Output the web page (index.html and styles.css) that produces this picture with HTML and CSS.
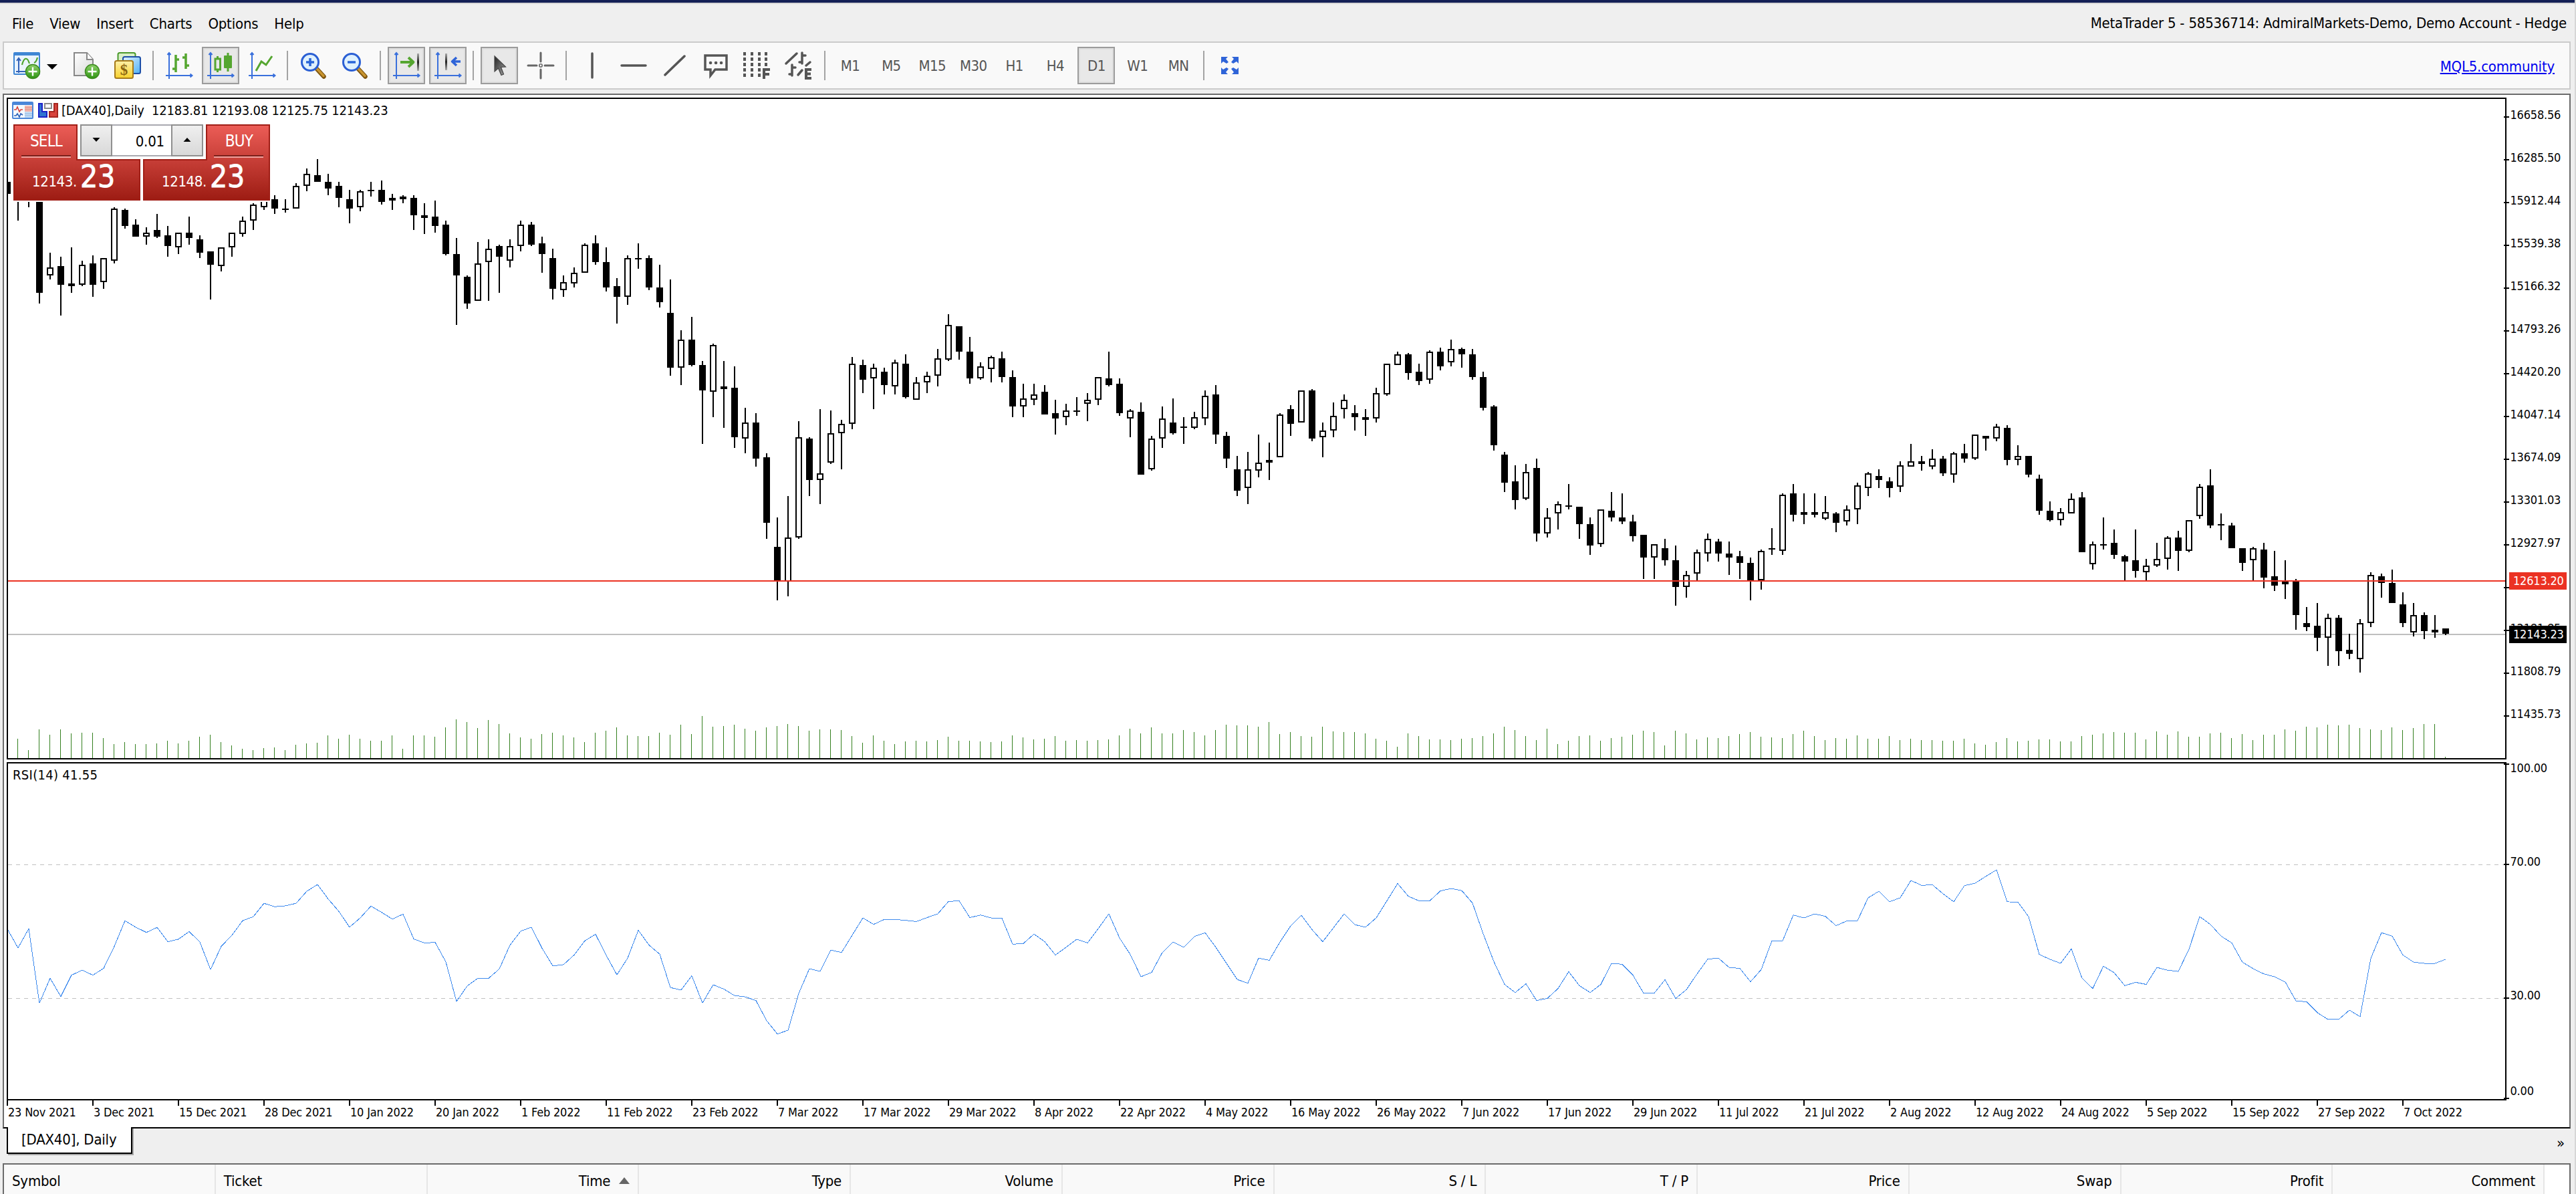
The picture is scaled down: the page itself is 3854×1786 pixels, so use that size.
FILE: index.html
```html
<!DOCTYPE html>
<html lang="en">
<head>
    <meta charset="UTF-8">
    <title>MetaTrader 5</title>
    <link rel="stylesheet" href="styles.css">
</head>
<body>
    <div class="titlebar-edge"></div>

    <header class="menubar">
        <nav class="menu">
            <span>File</span>
            <span>View</span>
            <span>Insert</span>
            <span>Charts</span>
            <span>Options</span>
            <span>Help</span>
        </nav>
        <div class="account">MetaTrader 5 - 58536714: AdmiralMarkets-Demo, Demo Account - Hedge</div>
    </header>

    <svg class="defs" width="0" height="0">
        <defs>
            <linearGradient id="greenBall" x1="0" y1="0" x2="0" y2="1">
                <stop offset="0" stop-color="#8ed16a"/><stop offset="1" stop-color="#2f9413"/>
            </linearGradient>
            <linearGradient id="page" x1="0" y1="0" x2="1" y2="1">
                <stop offset="0" stop-color="#fff"/><stop offset="1" stop-color="#d8d8d8"/>
            </linearGradient>
            <linearGradient id="gold" x1="0" y1="0" x2="0" y2="1">
                <stop offset="0" stop-color="#fff0a8"/><stop offset="1" stop-color="#f7d12c"/>
            </linearGradient>
            <linearGradient id="sky" x1="0" y1="0" x2="1" y2="1">
                <stop offset="0" stop-color="#e4f4ff"/><stop offset="1" stop-color="#4fb0f5"/>
            </linearGradient>
            <linearGradient id="steel" x1="0" y1="0" x2="0" y2="1">
                <stop offset="0" stop-color="#aaa"/><stop offset=".5" stop-color="#222"/><stop offset="1" stop-color="#aaa"/>
            </linearGradient>
            <linearGradient id="pointer" x1="0" y1="0" x2="1" y2="1">
                <stop offset="0" stop-color="#222"/><stop offset="1" stop-color="#a5a5a5"/>
            </linearGradient>
            <linearGradient id="red" x1="0" y1="0" x2="0" y2="1">
                <stop offset="0" stop-color="#ec5d57"/><stop offset="1" stop-color="#9d1c13"/>
            </linearGradient>
            <linearGradient id="button" x1="0" y1="0" x2="0" y2="1">
                <stop offset="0" stop-color="#f0f0f0"/><stop offset="1" stop-color="#d8d8d8"/>
            </linearGradient>
            <g id="plus">
                <circle cx="29" cy="29" r="10.5" fill="url(#greenBall)" stroke="#3c8a1e" stroke-width="1.5"/>
                <path d="M29 22.5v13M22.5 29h13" stroke="#fff" stroke-width="2.4" fill="none"/>
            </g>
            <g id="axes" stroke="#3a70dc" stroke-width="2" fill="none">
                <path d="M5 1v39M0 35h39"/>
                <path d="M2.5 4L5 1l2.5 3M36.5 32.5L39.5 35l-3 2.5"/>
            </g>
            <g id="lens">
                <path d="M24 24l11.5 12.5" stroke="#7d5510" stroke-width="6.5" stroke-linecap="round"/>
                <path d="M24.5 24l10.5 11.5" stroke="#c9952f" stroke-width="3.5" stroke-linecap="round"/>
                <circle cx="15" cy="15" r="12.5" fill="#dff1fd" stroke="#2a5fd4" stroke-width="3"/>
            </g>
        </defs>
    </svg>

    <div class="toolbar">
        <div class="tool">
            <svg class="icon" viewBox="0 0 40 40">
                <rect x="1" y="1" width="38" height="32" rx="1" fill="#eaf4fd" stroke="#3f86d4" stroke-width="2"/>
                <path d="M1 3h38" stroke="#3f86d4" stroke-width="4"/>
                <path d="M8 31V10M5 13l3-4 3 4M4 29h20" stroke="#3463b8" stroke-width="2" fill="none"/>
                <path d="M13 19c3-12 8-12 11-2M31 16c3-1 4-4 5-8" stroke="#4fa52e" stroke-width="2.2" fill="none"/>
                <use href="#plus"/>
            </svg>
        </div>
        <div class="caret"></div>
        <div class="tool">
            <svg class="icon" viewBox="0 0 40 40">
                <path d="M2 1h19l9 10v24H2z" fill="url(#page)" stroke="#888" stroke-width="2"/>
                <path d="M21 1v10h9" fill="#fff" stroke="#888" stroke-width="2"/>
                <use href="#plus"/>
            </svg>
        </div>
        <div class="tool">
            <svg class="icon" viewBox="0 0 40 40">
                <rect x="5.5" y="1" width="26" height="25" rx="2.5" fill="#d9f0c8" stroke="#4b9a2c" stroke-width="2"/>
                <rect x="13" y="7" width="26" height="25" rx="2.5" fill="url(#sky)" stroke="#1d4fa8" stroke-width="2"/>
                <rect x="1" y="13" width="27" height="26" rx="2.5" fill="url(#gold)" stroke="#a67a1a" stroke-width="2"/>
                <text x="14.5" y="34" class="dollar">$</text>
            </svg>
        </div>
        <i class="sep"></i>
        <div class="tool">
            <svg class="icon" viewBox="0 0 40 40">
                <use href="#axes"/>
                <path d="M15 4v26M10 25h5M15 11h5M30 2v23M25 8h5M30 20h5" stroke="#55a630" stroke-width="3.5" fill="none"/>
            </svg>
        </div>
        <div class="tool active">
            <svg class="icon" viewBox="0 0 40 40">
                <use href="#axes"/>
                <path d="M15.5 6v3M15.5 26v4M31 1v28" stroke="#55a630" stroke-width="3"/>
                <rect x="12" y="10" width="7.5" height="16" fill="none" stroke="#55a630" stroke-width="3"/>
                <rect x="25" y="5" width="12" height="19" rx="1" fill="#55a630"/>
            </svg>
        </div>
        <div class="tool">
            <svg class="icon" viewBox="0 0 40 40">
                <use href="#axes"/>
                <path d="M11 28l8-14 7 5 9-13" stroke="#55a630" stroke-width="3" fill="none"/>
            </svg>
        </div>
        <i class="sep"></i>
        <div class="tool">
            <svg class="icon" viewBox="0 0 40 40">
                <use href="#lens"/>
                <path d="M9 15h12M15 9v12" stroke="#2a66d8" stroke-width="3.5"/>
            </svg>
        </div>
        <div class="tool">
            <svg class="icon" viewBox="0 0 40 40">
                <use href="#lens"/>
                <path d="M9 15h12" stroke="#2a66d8" stroke-width="3.5"/>
            </svg>
        </div>
        <i class="sep"></i>
        <div class="tool active">
            <svg class="icon" viewBox="0 0 40 40">
                <use href="#axes"/>
                <path d="M11 15h19M23 8l7.5 7-7.5 7" stroke="#55a630" stroke-width="3.8" fill="none" stroke-linejoin="round"/>
                <rect x="36" y="2" width="3" height="26" fill="url(#steel)"/>
            </svg>
        </div>
        <div class="tool active">
            <svg class="icon" viewBox="0 0 40 40">
                <use href="#axes"/>
                <rect x="16" y="2" width="3" height="25" fill="url(#steel)"/>
                <path d="M39 14H27M33 8l-6.5 6 6.5 6" stroke="#2f64d8" stroke-width="3.6" fill="none" stroke-linejoin="round"/>
            </svg>
        </div>
        <i class="sep"></i>
        <div class="tool active">
            <svg class="icon" viewBox="0 0 40 40">
                <path d="M13 6v23l5.5-5 4.5 10.500 3.500-1.500-4-10.500 7-.5z" fill="url(#pointer)" stroke="#444" stroke-width="1.2"/>
            </svg>
        </div>
        <div class="tool">
            <svg class="icon" viewBox="0 0 40 40">
                <path d="M20 1v13M20 26v13M1 20h13M26 20h13" stroke="#666" stroke-width="3" stroke-linecap="round"/>
                <circle cx="20" cy="20" r="2.2" fill="none" stroke="#666" stroke-width="1.6"/>
            </svg>
        </div>
        <i class="sep"></i>
        <div class="tool">
            <svg class="icon dark" viewBox="0 0 40 40"><path d="M20 2v36" stroke-width="3.5"/></svg>
        </div>
        <div class="tool">
            <svg class="icon dark" viewBox="0 0 40 40"><path d="M2 20h36" stroke-width="3.5"/></svg>
        </div>
        <div class="tool">
            <svg class="icon dark" viewBox="0 0 40 40"><path d="M5 34L34 6" stroke-width="3.5"/></svg>
        </div>
        <div class="tool">
            <svg class="icon dark" viewBox="0 0 40 40">
                <path d="M3 5h32v21H18l-7 9v-9H3z" stroke-width="3.5" stroke-linecap="butt"/>
                <path d="M11 16h.1M19 16h.1M27 16h.1" stroke-width="4.5"/>
            </svg>
        </div>
        <div class="tool">
            <svg class="icon dark" viewBox="0 0 40 40">
                <path d="M0 0v38M11 0v38M22 0v38M32 0v22" stroke-width="4" stroke-dasharray="5 3" stroke-linecap="butt"/>
                <path d="M29 40V26h9M29 33h8" stroke-width="4" stroke-linecap="butt"/>
            </svg>
        </div>
        <div class="tool">
            <svg class="icon dark" viewBox="0 0 40 40">
                <path d="M0 17L16 2M24 1v16M20 15h4M24 5h5M9 19v16M5 33h4M9 23h5M18 34l6-7M30 20l6-5" stroke-width="3.5"/>
                <path d="M38 26h-8v13h8M30 32.5h7" stroke-width="4" stroke-linecap="butt"/>
            </svg>
        </div>
        <i class="sep"></i>
        <div class="periods">
            <div class="tool">M1</div>
            <div class="tool">M5</div>
            <div class="tool">M15</div>
            <div class="tool">M30</div>
            <div class="tool">H1</div>
            <div class="tool">H4</div>
            <div class="tool active">D1</div>
            <div class="tool">W1</div>
            <div class="tool">MN</div>
        </div>
        <i class="sep"></i>
        <div class="tool">
            <svg class="icon" viewBox="0 0 40 40">
                <g fill="#2f64d8">
                    <path d="M7 7h10l-3 3 4 5-3 2-5-3-3 3z"/>
                    <path d="M33 7H23l3 3-4 5 3 2 5-3 3 3z"/>
                    <path d="M7 33h10l-3-3 4-5-3-2-5 3-3-3z"/>
                    <path d="M33 33H23l3-3-4-5 3-2 5 3 3-3z"/>
                </g>
            </svg>
        </div>
        <a class="community" href="#">MQL5.community</a>
    </div>

    <main class="chart-window">
        <svg id="chart" viewBox="6 142 3838 1544" width="3838" height="1544">
            <g id="volumes" class="volume"></g>
            <path id="bidLine" class="bid-line" d="M12 949H3748"/>
            <path id="wicks" class="candle"/>
            <path id="hollow" class="candle-hollow"/>
            <path class="alert-line" d="M12 869H3748"/>
            <path class="level" d="M12 1293.5H3748M12 1493.5H3748"/>
            <polyline id="rsi" class="rsi"/>
            <path class="frame" d="M3749 147H11V1135H3749zM3749 1141H11V1645H3749z"/>
            <g id="priceAxis"></g>
            <g id="dateAxis"></g>

            <!-- chart caption -->
            <g transform="translate(18 152)">
                <rect x="1" y="1" width="30" height="24" rx="1" fill="#f4f9fe" stroke="#4a86d8" stroke-width="2"/>
                <path d="M1 3h30" stroke="#4a86d8" stroke-width="4"/>
                <path d="M19 6h11v9H19z" fill="#f3b8ae"/>
                <path d="M19 15h11v9H19z" fill="#c5ddf4"/>
                <path d="M19 9h11M19 12h11" stroke="#e08a80"/>
                <path d="M19 18h11M19 21h11" stroke="#8fb6e2"/>
                <path d="M3 12h3l2-4 3 7 2-3h3" stroke="#d8423a" stroke-width="1.6" fill="none"/>
                <path d="M3 21h3l2-3 3 5 2-5 3 2" stroke="#2b62b8" stroke-width="1.6" fill="none"/>
            </g>
            <g transform="translate(57 154)">
                <path d="M1 1h5v12h7v8H1z" fill="#2f74d0" stroke="#1d22c8" stroke-width="2"/>
                <path d="M29 1h-5v12h-7v8h12z" fill="#d8433c" stroke="#a52720" stroke-width="2"/>
                <rect x="10" y="1" width="10" height="7" fill="#fff" stroke="#8a8a8a" stroke-width="2"/>
            </g>
            <text class="caption" x="92" y="172">[DAX40],Daily</text>
            <text class="caption" x="227" y="172">12183.81 12193.08 12125.75 12143.23</text>
            <text class="caption indicator" x="19" y="1166">RSI(14) 41.55</text>

            <!-- one click trading panel -->
            <g class="trade">
                <rect x="18" y="184" width="388" height="118" fill="#fff"/>
                <path class="deal" d="M21 187H115V239H209V299H21z"/>
                <path class="deal" d="M403 187H309V239H215V299H403z"/>
                <path d="M32 233h74M320 233h74" stroke="#7b1f1a" stroke-width="2"/>
                <path d="M32 235h74M320 235h74" stroke="#f0a19d" stroke-width="2"/>
                <rect x="121" y="187" width="182" height="46" class="spin-field"/>
                <rect x="121" y="187" width="46" height="46" class="spin"/>
                <rect x="257" y="187" width="46" height="46" class="spin"/>
                <path d="M138.5 206h11l-5.5 6zM274.5 212h11l-5.5-6z"/>
                <text class="deal-label" x="69" y="219">SELL</text>
                <text class="deal-label" x="357.5" y="219">BUY</text>
                <text class="lots" x="246" y="219">0.01</text>
                <text class="pips" x="48" y="279">12143.</text>
                <text class="big" x="120" y="280">23</text>
                <text class="pips" x="242" y="279">12148.</text>
                <text class="big" x="314" y="280">23</text>
            </g>
        </svg>
    </main>

    <div class="tabs">
        <div class="tab">[DAX40], Daily</div>
        <div class="more">»</div>
    </div>

    <section class="orders">
        <div class="col left">Symbol</div>
        <div class="col left">Ticket</div>
        <div class="col">Time <i class="sorted"></i></div>
        <div class="col">Type</div>
        <div class="col">Volume</div>
        <div class="col">Price</div>
        <div class="col">S / L</div>
        <div class="col">T / P</div>
        <div class="col">Price</div>
        <div class="col">Swap</div>
        <div class="col">Profit</div>
        <div class="col">Comment</div>
    </section>

    <script src="chart.js"></script>
</body>
</html>
```

FILE: styles.css
```css
* {
    box-sizing: border-box;
}
body {
    margin: 0;
    width: 3854px;
    height: 1786px;
    overflow: hidden;
    display: flex;
    flex-direction: column;
    background: #efefef;
    border-right: 2px solid #d6d6d6;
    color: #000;
    font-family: "DejaVu Sans Condensed", "DejaVu Sans", Tahoma, sans-serif;
    font-stretch: condensed;
    font-size: 22px;
    letter-spacing: -0.2px;
}
.defs {
    position: absolute;
}
.titlebar-edge {
    width: 3854px;
    height: 6px;
    flex: none;
    background: #142056;
    border-bottom: 2px solid #d6d6d6;
}

/* menu */
.menubar {
    height: 56px;
    flex: none;
    display: flex;
    justify-content: space-between;
    align-items: center;
    padding: 0 12px 0 18px;
}
.menu {
    display: flex;
    gap: 24px;
    padding-top: 3px;
}
.account {
    padding-top: 1px;
}

/* toolbar */
.toolbar {
    height: 72px;
    flex: none;
    margin: 0 6px 6px 4px;
    padding-left: 6px;
    display: flex;
    align-items: center;
    gap: 6px;
    background: #f9f9f9;
    border: 2px solid #cbcbcb;
}
.tool {
    width: 56px;
    height: 56px;
    flex: none;
    display: flex;
    align-items: center;
    justify-content: center;
    color: #555;
    letter-spacing: -0.6px;
}
.active {
    background: #e8e8e8;
    border: 2px solid #9c9c9c;
    box-shadow: inset 0 0 0 2px #dedede;
}
.icon {
    width: 40px;
    height: 40px;
    flex: none;
    overflow: visible;
}
.dark {
    fill: none;
    stroke: #555;
    stroke-linecap: round;
}
.dollar {
    font: bold 23px "Liberation Serif", serif;
    text-anchor: middle;
    letter-spacing: 0;
    fill: #8a6410;
}
.caret {
    width: 27px;
    height: 8px;
    flex: none;
    margin-left: -6px;
    background: #000;
    clip-path: polygon(2px 0, 18px 0, 10px 8px);
    margin-top: 4px;
}
.sep {
    width: 2px;
    height: 44px;
    flex: none;
    margin: 0 4px 0 3px;
    background: #a3a3a3;
}
.periods {
    display: flex;
    gap: 5.4px;
    margin-left: -1px;
}
.community {
    margin-left: auto;
    margin-right: 22px;
    padding-top: 2px;
    color: #00e;
    text-underline-offset: 2px;
    text-decoration-thickness: 2px;
}

/* chart */
.chart-window {
    height: 1548px;
    flex: none;
    margin: 0 6px 0 4px;
    background: #fff;
    border: 2px solid #6b6b6b;
    border-bottom-color: #000;
}
#chart {
    display: block;
    overflow: hidden;
}
.frame,
.tick {
    fill: none;
    stroke: #000;
    stroke-width: 2;
    shape-rendering: crispEdges;
}
.candle {
    fill: #000;
    shape-rendering: crispEdges;
}
.candle-hollow {
    fill: #fff;
    shape-rendering: crispEdges;
}
.volume {
    fill: #34801f;
    shape-rendering: crispEdges;
}
.bid-line {
    stroke: #bfbfbf;
    stroke-width: 2;
}
.alert-line {
    stroke: #eb3223;
    stroke-width: 2;
}
.level {
    stroke: #c0c0c0;
    stroke-width: 1;
    stroke-dasharray: 6 6;
}
.rsi {
    fill: none;
    stroke: #3f8bee;
    stroke-width: 1;
    shape-rendering: crispEdges;
}
.axis-text {
    font-size: 18px;
}
.tag-text {
    font-size: 18px;
    fill: #fff;
}
.caption {
    font-size: 20px;
}
.indicator {
    letter-spacing: 0.3px;
}
.deal {
    fill: url(#red);
    stroke: #a01f17;
    stroke-width: 2;
}
.spin-field {
    fill: #fff;
    stroke: #a9a9b0;
    stroke-width: 2;
}
.spin {
    fill: url(#button);
    stroke: #8f8f8f;
    stroke-width: 2;
}
.deal-label {
    font-size: 24px;
    letter-spacing: -0.8px;
    text-anchor: middle;
    fill: #fff;
}
.lots {
    text-anchor: end;
}
.pips {
    fill: #fff;
    letter-spacing: -0.4px;
}
.big {
    font-size: 46px;
    fill: #fff;
    stroke: #fff;
    stroke-width: 0.8;
}

/* chart tabs */
.tabs {
    height: 52px;
    flex: none;
    display: flex;
    justify-content: space-between;
    align-items: flex-start;
    padding: 0 15px 0 10px;
}
.tab {
    width: 188px;
    height: 40px;
    margin-top: -2px;
    padding: 6px 0 0 20px;
    background: #fff;
    border: 2px solid #000;
    border-top: none;
    box-shadow: 2px 2px 0 #a8a8a8;
    white-space: nowrap;
}
.more {
    padding-top: 9px;
}

/* orders table */
.orders {
    flex: 1;
    display: flex;
    margin: 0 6px 0 4px;
    background: #fff;
    border: 2px solid #6b6b6b;
    border-bottom: none;
}
.col {
    width: 316.75px;
    flex: none;
    display: flex;
    justify-content: flex-end;
    align-items: center;
    padding: 4px 12px 0 12px;
    background: #f9f9f9;
    border-right: 2px solid #e6e6e6;
}
.left {
    justify-content: flex-start;
}
.sorted {
    margin-left: 13px;
    border: 8px solid transparent;
    border-top: none;
    border-bottom: 10px solid #666;
}
```

FILE: chart.js
```js
const NS = 'http://www.w3.org/2000/svg';
const barX = i => 11 + 16 * i;

// high, body top, body bottom, low (one unit = 2px); trailing 1 = rising bar
const candles = [
    [136,136,145,145],[140,145,151,165],[140,145,151,155],[140,142,219,227],[189,200,206,209,1],
    [192,199,213,236],[185,212,214,219],[195,198,213,214,1],[191,197,213,222],[193,193,211,216,1],
    [155,156,195,197,1],[156,157,169,171],[164,168,177,177],[170,174,177,183,1],[160,172,177,178],
    [169,176,184,192],[174,174,185,190,1],[162,174,178,183],[176,179,189,193],[188,188,198,224],
    [185,185,199,203,1],[174,174,185,192,1],[162,165,175,177,1],[152,153,165,172,1],[140,142,155,157,1],
    [146,149,156,160],[149,156,157,159],[137,139,156,156,1],[126,130,139,143,1],[119,131,136,136],
    [130,136,141,146],[136,139,148,155],[142,149,156,167],[142,143,155,158,1],[136,142,143,147],
    [135,142,151,153],[145,148,150,157],[146,147,149,152],[146,148,161,172],[152,161,163,175],
    [150,162,169,174],[165,168,190,191],[178,190,206,243],[206,207,227,231],[181,197,225,225,1],
    [179,186,196,225,1],[183,184,192,219],[179,184,195,200,1],[165,168,184,188,1],[166,168,183,184],
    [177,182,190,204],[186,193,216,224],[206,211,217,222,1],[200,204,212,215,1],[182,183,204,204,1],
    [176,182,196,198],[185,196,215,218],[208,214,222,242],[191,193,222,228,1],[182,193,194,201],
    [191,193,215,217],[198,215,226,230],[209,234,275,281],[247,254,275,288,1],[237,254,273,274],
    [270,273,292,332],[257,258,293,312,1],[270,289,291,320],[274,290,327,335],[305,316,328,339,1],
    [309,316,343,349],[339,342,391,403],[387,409,434,449],[371,402,435,446,1],[315,327,402,403,1],
    [327,328,359,371],[306,354,359,377,1],[307,324,346,347,1],[314,317,324,351,1],[267,272,317,321,1],
    [269,273,284,294],[272,275,283,306,1],[275,278,288,295],[269,271,289,295,1],[265,272,297,298],
    [282,286,299,299,1],[278,281,286,294,1],[261,268,281,289,1],[235,243,269,270,1],[244,244,263,269],
    [252,263,283,287],[271,274,283,284,1],[266,267,276,286,1],[263,268,282,286],[277,282,304,312],
    [287,298,304,312,1],[287,295,299,303,1],[288,293,310,310],[299,309,313,325],[302,307,312,318,1],
    [297,307,308,311],[294,299,302,315,1],[282,282,299,303,1],[263,283,288,289],[283,287,309,311],
    [306,307,313,327,1],[301,308,355,355],[326,328,351,352,1],[304,313,328,335,1],[298,316,324,325],
    [312,319,320,332],[308,312,320,321,1],[292,296,313,318,1],[288,295,325,332],[323,326,343,350],
    [341,351,367,371],[338,351,365,377,1],[325,346,352,357,1],[331,344,346,359],[309,310,342,342,1],
    [303,306,317,326],[292,292,316,316,1],[291,292,328,330],[316,322,327,342,1],[301,311,322,327,1],
    [295,299,306,313,1],[303,309,312,322],[306,312,314,326],[290,294,313,316,1],[272,272,295,296,1],
    [263,265,273,273,1],[264,265,279,284],[272,278,285,288],[262,263,284,287,1],[260,263,274,277],
    [254,261,271,274,1],[260,261,265,275],[261,265,282,284],[278,282,305,307],[303,304,333,337],
    [338,340,361,368],[348,360,374,381],[347,353,373,374,1],[343,350,399,405],[380,387,399,402,1],
    [375,377,384,396,1],[362,378,379,381],[379,379,392,403],[387,392,408,415],[381,381,407,409,1],
    [368,382,387,390],[369,387,390,392],[385,390,401,405],[400,400,417,433],[407,407,417,433,1],
    [403,410,419,423],[408,419,439,453],[427,430,439,447,1],[411,413,429,434,1],[399,403,414,420,1],
    [403,405,414,420],[405,414,417,430],[412,416,421,433],[417,421,434,449],[411,412,434,441,1],
    [395,410,411,415],[369,370,412,415,1],[362,369,385,390],[369,383,385,392],[369,383,385,387],
    [371,383,388,389,1],[383,384,391,398],[378,381,390,393,1],[361,363,381,392,1],[353,354,365,371,1],
    [351,356,359,365],[357,360,365,372],[345,348,364,368,1],[332,345,349,349,1],[341,345,347,352],
    [336,343,349,351,1],[341,343,354,356],[338,339,355,361,1],[332,339,343,346],[325,325,343,344,1],
    [326,326,328,337],[317,319,328,330,1],[318,320,344,348],[333,341,344,348,1],[341,341,355,357],
    [355,358,382,385],[375,382,389,390],[380,383,389,393,1],[369,373,384,384,1],[368,372,413,413],
    [405,407,422,426,1],[387,407,408,411],[396,406,415,418],[415,416,420,434],[396,419,427,432],
    [418,423,428,434,1],[406,418,423,424,1],[401,402,418,426,1],[397,402,412,427],[389,389,412,413,1],
    [362,364,386,388,1],[351,363,393,395],[384,392,393,404],[391,393,410,410],[410,410,421,427],
    [409,410,419,434,1],[406,411,432,440],[412,431,438,442],[419,435,437,448],[433,435,460,471],
    [454,466,469,472],[451,468,477,487],[459,462,477,498,1],[460,462,487,498],[474,486,489,493],
    [463,466,493,503,1],[428,430,466,469,1],[429,431,436,447],[426,436,451,451],[443,452,466,469],
    [451,460,473,476,1],[458,460,472,478],[460,471,473,477],[470,470,474,475]
];

// volume tops and RSI points share one vertical scale, see paneY()
const volumes = [
    null,97,134,67,84,67,80,78,78,95,114,108,114,114,112,104,112,104,91,84,
    108,119,130,134,127,125,134,117,112,110,86,97,84,97,104,104,86,130,86,86,
    91,60,35,43,63,37,50,80,93,97,82,78,86,93,108,78,71,60,86,89,
    89,78,84,52,82,24,58,56,52,65,71,60,56,50,56,71,67,67,69,89,
    110,86,104,114,106,104,106,102,91,104,104,106,108,106,86,93,99,97,89,104,
    102,104,101,99,86,65,80,60,80,80,69,76,86,69,52,54,54,58,43,82,
    76,89,91,58,73,76,76,80,97,104,123,80,89,99,99,102,97,95,89,80,
    58,69,89,102,65,114,104,89,86,104,95,91,84,71,76,119,71,80,99,93,
    95,89,82,76,91,93,95,82,71,89,102,95,97,86,97,97,89,102,97,102,
    102,104,104,97,112,117,108,95,106,104,99,99,106,106,89,84,80,76,78,78,
    99,73,84,73,91,91,80,78,95,82,102,84,84,67,71,58,60,52,54,52,
    63,67,69,60,69,63,50,50,156
];

const rsi = [
    712,773,711,951,871,930,861,845,861,839,768,685,706,723,707,753,745,720,754,843,
    768,732,685,672,629,640,637,629,590,568,615,655,706,676,638,658,680,664,744,757,
    755,818,946,896,871,871,841,764,719,706,774,831,827,796,750,729,797,860,806,716,
    764,793,901,909,863,951,892,906,927,931,943,1008,1051,1039,920,840,849,780,788,732,
    676,697,681,681,684,688,675,663,623,621,675,667,676,677,761,759,728,753,796,771,
    745,757,711,663,741,794,866,852,788,754,771,736,724,771,823,875,887,806,813,754,
    702,668,714,753,708,663,698,706,676,621,565,606,621,621,589,581,588,628,727,817,
    891,917,889,943,936,904,850,895,917,891,823,826,861,919,919,876,936,908,857,809,
    806,836,839,882,843,750,750,667,676,663,671,701,686,685,611,590,624,611,555,571,
    569,598,624,572,564,542,521,624,625,672,794,810,823,776,871,904,832,853,895,884,
    891,836,845,849,777,672,697,735,757,819,840,857,866,883,944,947,982,1004,1004,974,
    995,807,724,735,796,819,823,823,810
];

const dates = [
    '23 Nov 2021', '3 Dec 2021', '15 Dec 2021', '28 Dec 2021', '10 Jan 2022', '20 Jan 2022',
    '1 Feb 2022', '11 Feb 2022', '23 Feb 2022', '7 Mar 2022', '17 Mar 2022', '29 Mar 2022',
    '8 Apr 2022', '22 Apr 2022', '4 May 2022', '16 May 2022', '26 May 2022', '7 Jun 2022',
    '17 Jun 2022', '29 Jun 2022', '11 Jul 2022', '21 Jul 2022', '2 Aug 2022', '12 Aug 2022',
    '24 Aug 2022', '5 Sep 2022', '15 Sep 2022', '27 Sep 2022', '7 Oct 2022'
];

const prices = [
    '16658.56', '16285.50', '15912.44', '15539.38', '15166.32', '14793.26', '14420.20', '14047.14',
    '13674.09', '13301.03', '12927.97', null, '12181.85', '11808.79', '11435.73'
];

const paneY = v => 1060 + v * 0.463;

function add(parent, name, attrs, text) {
    const el = document.createElementNS(NS, name);
    for (const key in attrs) el.setAttribute(key, attrs[key]);
    if (text) el.textContent = text;
    parent.appendChild(el);
    return el;
}

function box(x, y, w, h) {
    return `M${x} ${y}h${w}v${h}h${-w}z`;
}

function drawCandles() {
    let black = '';
    let white = '';
    candles.forEach(([high, top, bottom, low, rising], i) => {
        const x = barX(i);
        // the first bar is cut by the frame
        const left = Math.max(x - 5, 11);
        black += box(x - 1, high * 2, 2, (low - high) * 2);
        black += box(left, top * 2, x + 5 - left, (bottom - top) * 2);
        if (rising) white += box(x - 3, top * 2 + 2, 6, (bottom - top) * 2 - 4);
    });
    document.getElementById('wicks').setAttribute('d', black);
    document.getElementById('hollow').setAttribute('d', white);
}

function drawVolumes() {
    const group = document.getElementById('volumes');
    volumes.forEach((v, i) => {
        if (v === null) return;
        const y = Math.round(paneY(v));
        add(group, 'rect', { x: barX(i) - 1, y: y, width: 1, height: 1134 - y });
    });
}

function drawRsi() {
    const points = rsi.map((v, i) => `${barX(i)},${paneY(v).toFixed(1)}`);
    document.getElementById('rsi').setAttribute('points', points.join(' '));
}

function drawPriceAxis() {
    const axis = document.getElementById('priceAxis');
    const tick = y => add(axis, 'path', { class: 'tick', d: `M3746 ${y}h8` });
    const label = (text, y) => add(axis, 'text', { class: 'axis-text', x: 3755.5, y: y }, text);

    prices.forEach((price, k) => {
        tick(175 + 64 * k);
        // the alert tag covers this label completely
        if (price) label(price, 177.5 + 64 * k);
    });
    [[1143, '100.00', 1155], [1293, '70.00', 1295], [1493, '30.00', 1495], [1643, '0.00', 1638]]
        .forEach(([y, text, base]) => {
            tick(y);
            label(text, base);
        });

    add(axis, 'rect', { x: 3754, y: 856, width: 86, height: 26, fill: '#eb3223' });
    add(axis, 'text', { class: 'tag-text', x: 3760, y: 875 }, '12613.20');
    add(axis, 'rect', { x: 3754, y: 936, width: 86, height: 26 });
    add(axis, 'text', { class: 'tag-text', x: 3760, y: 955 }, '12143.23');
}

function drawDateAxis() {
    const axis = document.getElementById('dateAxis');
    dates.forEach((date, k) => {
        const x = barX(k * 8);
        add(axis, 'path', { class: 'tick', d: `M${x} 1646v8` });
        add(axis, 'text', { class: 'axis-text', x: x + 1, y: 1670 }, date);
    });
}

drawCandles();
drawVolumes();
drawRsi();
drawPriceAxis();
drawDateAxis();
```
